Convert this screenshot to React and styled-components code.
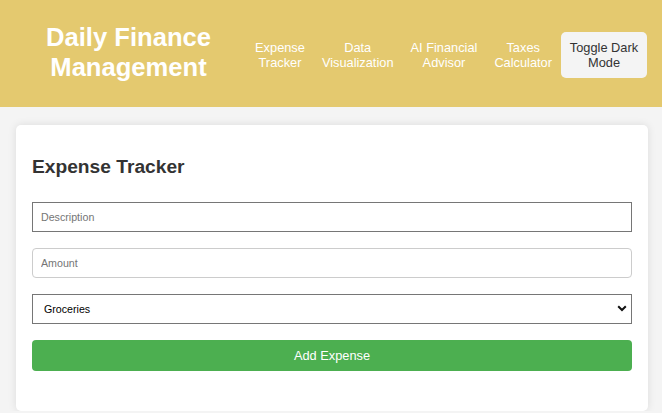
import React, { useState } from "react";
import styled, { createGlobalStyle } from "styled-components";

const GlobalStyle = createGlobalStyle`
  * {
    box-sizing: border-box;
  }
  body {
    margin: 0;
    background-color: #f4f4f4;
    font-family: "Liberation Sans", Arial, sans-serif;
    color: #333;
  }
`

const StHeader = styled.header`
  display: flex;
  align-items: center;
  height: 107px;
  padding: 0 15px 0 16px;
  background-color: #e4c96f;
`

const StTitle = styled.h1`
  flex: 1;
  margin: 0 0 4px;
  padding-right: 6px;
  font-size: 25.6px;
  line-height: 30px;
  font-weight: bold;
  color: #fff;
  text-align: center;
`

const StNav = styled.nav`
  display: flex;
  align-items: center;
  gap: 1px;
  margin-top: 2px;
`

const StLink = styled.a`
  padding: 8px;
  font-size: 12.8px;
  line-height: 15px;
  color: #fff;
  text-align: center;
  text-decoration: none;
  cursor: pointer;
`

const StToggle = styled.button`
  width: 86px;
  height: 46px;
  padding: 0 8px;
  border: none;
  border-radius: 5px;
  background-color: #f4f4f4;
  color: #333;
  font-family: inherit;
  font-size: 12.8px;
  line-height: 15px;
  cursor: pointer;
`

const StMain = styled.main`
  padding: 18px 14px 0 16px;
`

const StCard = styled.section`
  padding: 16px 16px 40px;
  border-radius: 5px;
  background-color: #fff;
  box-shadow: 0 0 8px rgba(0, 0, 0, 0.1);
`

const StHeading = styled.h2`
  margin: 15px 0 24px;
  font-size: 19.2px;
  line-height: 22px;
  font-weight: bold;
  color: #333;
`

const StForm = styled.form`
  display: flex;
  flex-direction: column;
  gap: 16px;
`

const StInput = styled.input`
  width: 100%;
  height: 30px;
  padding: 0 8px;
  border: 1px solid ${({ $dark }) => ($dark ? "#767676" : "#ccc")};
  border-radius: ${({ $dark }) => ($dark ? "0" : "4px")};
  background: #fff;
  font-family: inherit;
  font-size: 10.67px;
  color: #333;
  outline: none;

  &::placeholder {
    color: #757575;
  }
`

const StSelectWrap = styled.div`
  position: relative;
`

const StSelect = styled.select`
  width: 100%;
  height: 30px;
  padding: 0 8px 0 11px;
  border: 1px solid #767676;
  border-radius: 0;
  background: #fff;
  font-family: inherit;
  font-size: 10.67px;
  color: #000;
  appearance: none;
  outline: none;
`

const StChevron = styled.svg`
  position: absolute;
  right: 5px;
  top: 11px;
  pointer-events: none;
`

const StButton = styled.button`
  height: 31px;
  border: none;
  border-radius: 4px;
  background-color: #4caf50;
  color: #fff;
  font-family: inherit;
  font-size: 12.8px;
  cursor: pointer;
`

const links = [
  ["Expense", "Tracker"],
  ["Data", "Visualization"],
  ["AI Financial", "Advisor"],
  ["Taxes", "Calculator"],
]

const App = () => {
  const [category, setCategory] = useState("Groceries")

  return (
    <>
      <GlobalStyle />
      <StHeader>
        <StTitle>
          Daily Finance
          <br />
          Management
        </StTitle>
        <StNav>
          {links.map(([a, b]) => (
            <StLink key={a}>
              {a}
              <br />
              {b}
            </StLink>
          ))}
          <StToggle>Toggle Dark Mode</StToggle>
        </StNav>
      </StHeader>
      <StMain>
        <StCard>
          <StHeading>Expense Tracker</StHeading>
          <StForm onSubmit={(e) => e.preventDefault()}>
            <StInput $dark placeholder="Description" />
            <StInput placeholder="Amount" type="number" />
            <StSelectWrap>
              <StSelect value={category} onChange={(e) => setCategory(e.target.value)}>
                <option>Groceries</option>
                <option>Transport</option>
                <option>Entertainment</option>
                <option>Bills</option>
                <option>Other</option>
              </StSelect>
              <StChevron width="10" height="7" viewBox="0 0 10 7">
                <path d="M1.2 1.2 L5 5 L8.8 1.2" fill="none" stroke="#111" strokeWidth="2" />
              </StChevron>
            </StSelectWrap>
            <StButton type="submit">Add Expense</StButton>
          </StForm>
        </StCard>
      </StMain>
    </>
  )
}

export default App;
